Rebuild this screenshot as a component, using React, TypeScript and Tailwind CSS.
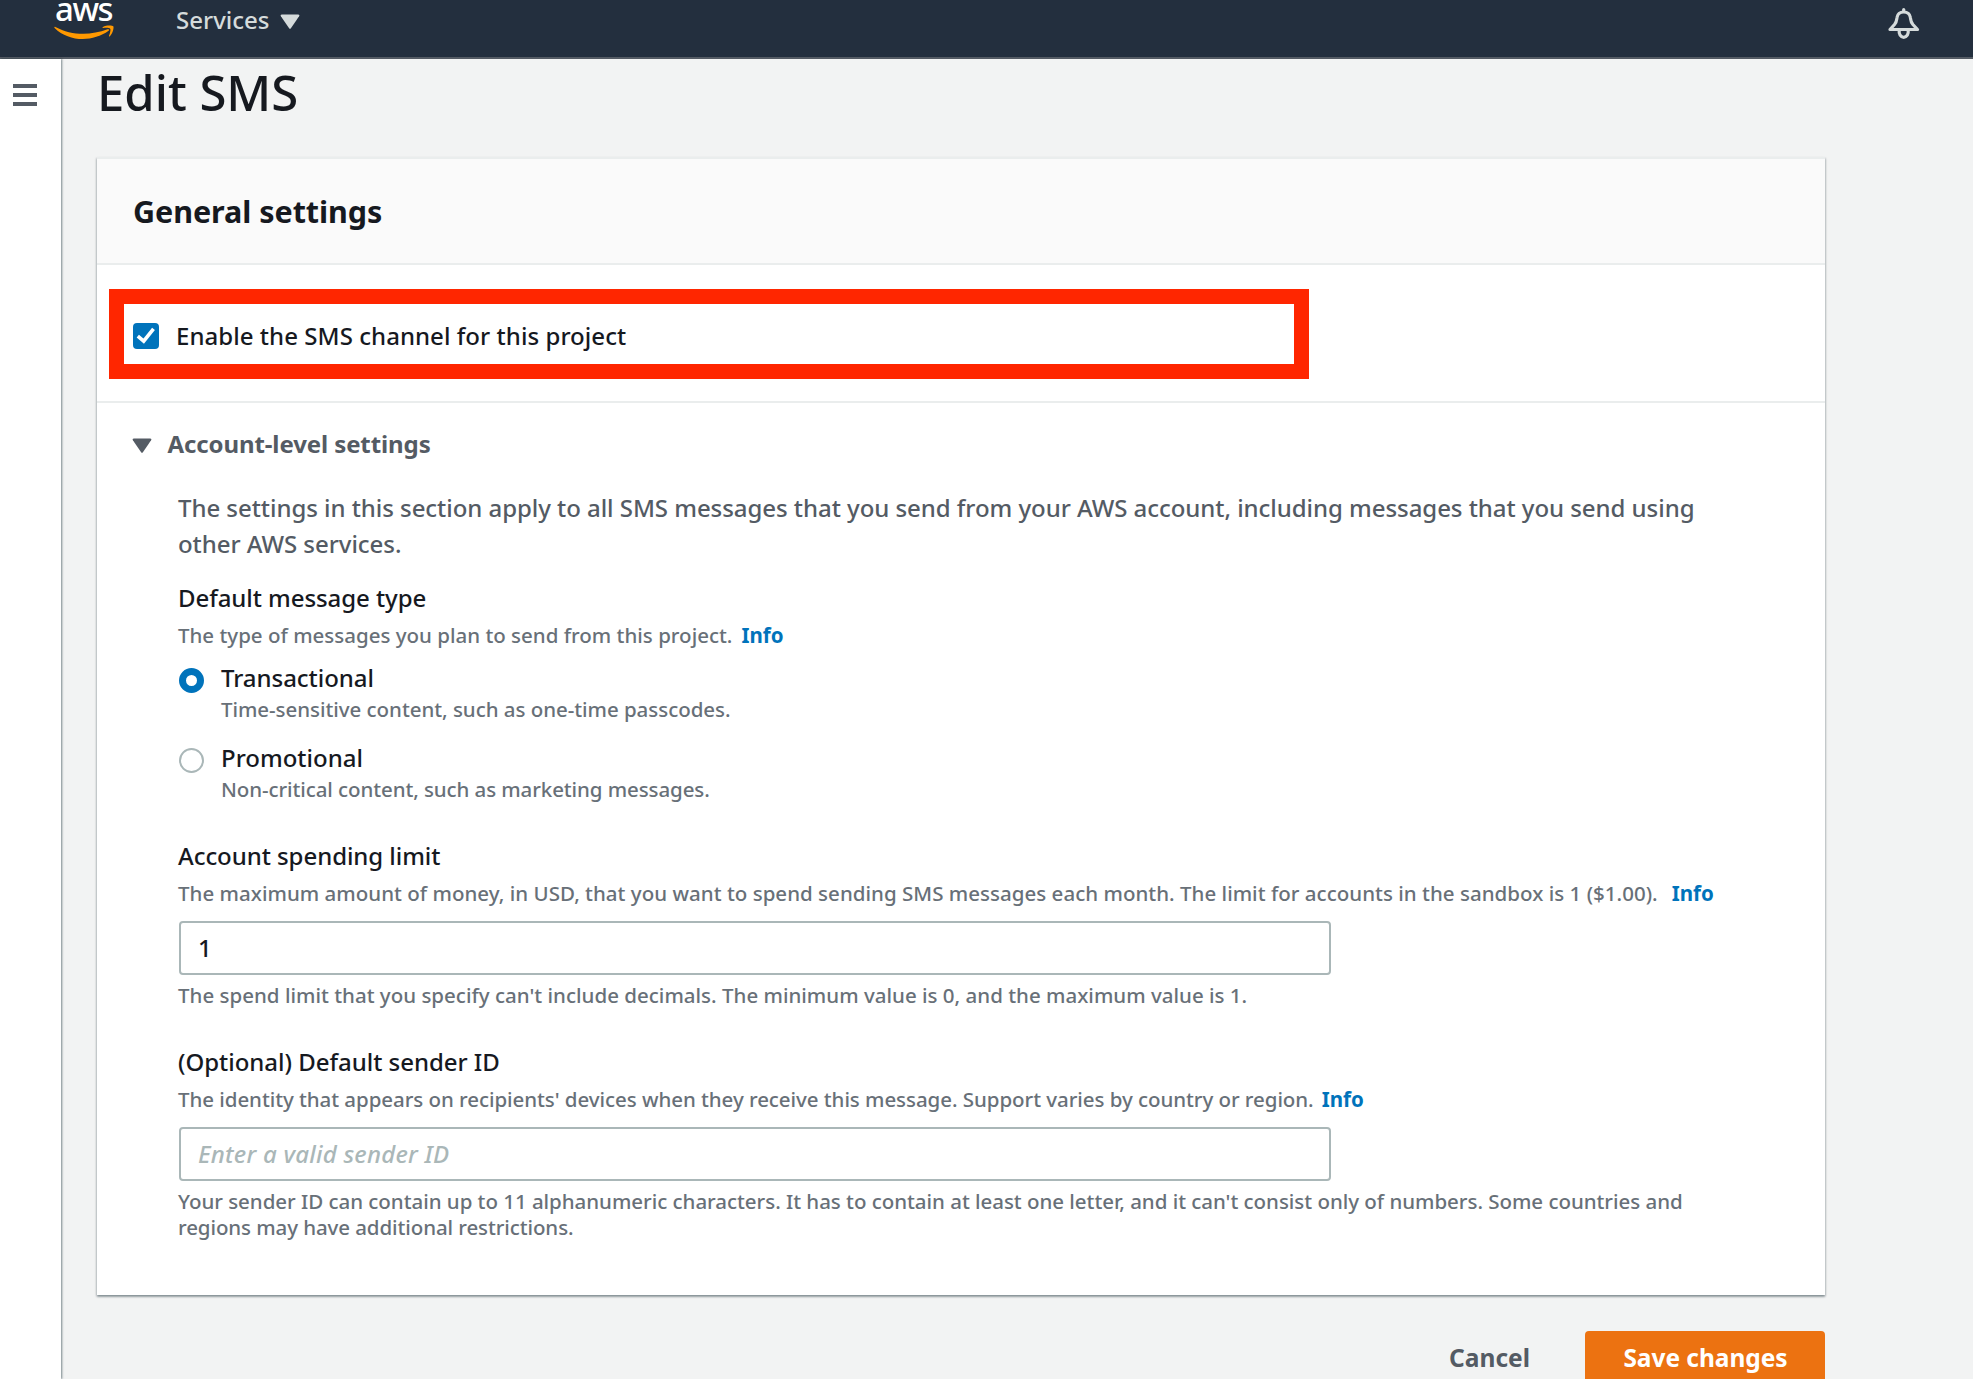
import type { ReactNode } from "react";

function AwsLogo() {
  return (
    <div className="relative h-10 w-[62px]">
      <div className="absolute left-[2px] top-0 text-[33px] leading-[18px] tracking-[-1.500px] text-white">aws</div>
      <svg className="absolute left-[0.500px] top-[24.500px]" width="61" height="16" viewBox="0 0 61 16" fill="#ff9900">
        <path d="M0.600 2.900C-0.100 2.200 0.500 1.400 1.400 1.900C17 10.300 36 10.800 53.500 4.300C55 3.700 55.800 4.900 54.600 5.800C38.500 17.300 15 17 0.600 2.900Z" />
        <path d="M49.200 3C48.400 3.100 48.300 2.300 49 1.900C52 0 58.400 0 59.300 1.300C60.200 2.600 58.700 8.600 55.900 11.300C55.300 11.800 54.700 11.500 55 10.800C55.900 8.500 57 4.800 56.200 3.700C55.400 2.600 51.700 2.700 49.200 3Z" />
      </svg>
    </div>
  );
}

function BellIcon() {
  return (
    <svg width="32" height="32" viewBox="0 0 32 32" fill="none" stroke="#d5dbdb" strokeWidth="3.200" strokeLinejoin="round" strokeLinecap="round">
      <path d="M15.700 1.600V3" />
      <path d="M2 21.500L6.500 16.500C9 13.500 8.600 11.500 9 9.500C9.600 6 12 4 15.700 4C19.400 4 21.800 6 22.400 9.500C22.800 11.500 22.400 13.500 24.900 16.500L29.500 21.500Z" />
      <path d="M11.200 22.500C10.700 26 12.600 29.300 15.700 29.300C18.800 29.300 20.700 26 20.200 22.500" />
    </svg>
  );
}

function Caret({ className }: { className: string }) {
  return (
    <svg className={className} width="20" height="16" viewBox="0 0 20 16" fill="currentColor">
      <path d="M1.800 0.500H18.200C19.300 0.500 19.700 1.300 19.100 2.200L10.900 14.300C10.400 15 9.600 15 9.100 14.300L0.900 2.200C0.300 1.300 0.700 0.500 1.800 0.500Z" />
    </svg>
  );
}

function Label({ children, className = "" }: { children: ReactNode; className?: string }) {
  return <div className={"text-[24px] leading-[36px] whitespace-nowrap " + className}>{children}</div>;
}

function Hint({ children, className = "", info = "" }: { children: ReactNode; className?: string; info?: string }) {
  return (
    <div className={"text-[20.5px] leading-[26px] whitespace-nowrap text-[#687078] " + className}>
      <span>{children}</span>
      {info && <a className={"font-bold tracking-normal text-[#0073bb] " + info}>Info</a>}
    </div>
  );
}

function Radio({ checked = false }: { checked?: boolean }) {
  return checked ? (
    <span className="ml-[0.500px] mt-[7.500px] size-[25px] shrink-0 rounded-full border-[7.500px] border-[#0073bb] bg-white" />
  ) : (
    <span className="ml-[0.500px] mt-[7.500px] size-[25px] shrink-0 rounded-full border-2 border-[#aab7b8] bg-white" />
  );
}

function TextField({ children }: { children: ReactNode }) {
  return (
    <div className="ml-[1px] mt-[15px] flex h-[54px] w-[1152px] items-center rounded-[4px] border-2 border-[#aab7b8] bg-white pl-[17px]">
      {children}
    </div>
  );
}

export default function App() {
  return (
    <div className="flex h-[1379px] w-[1973px] flex-col overflow-hidden bg-[#f2f3f3] font-['Noto_Sans',sans-serif] font-medium text-[#16191f]">
      <header className="flex h-[59px] shrink-0 items-start border-b-2 border-[#545b64] bg-[#232f3e] pl-[53px] pr-[53px]">
        <AwsLogo />
        <div className="ml-[61px] mt-[2px] flex items-center text-[24px] leading-[36px] text-[#d5dbdb]">
          <span>Services</span>
          <Caret className="ml-[11px] mt-[3px]" />
        </div>
        <div className="ml-auto mt-[8px]">
          <BellIcon />
        </div>
      </header>

      <div className="flex min-h-0 flex-1">
        <aside className="w-[61px] shrink-0 bg-white pl-[13px] pt-[25px] shadow-[1px_0_2px_0_rgba(0,28,36,0.5)]">
          <div className="flex w-[24px] flex-col gap-[5.500px]">
            <span className="h-[3.500px] bg-[#545b64]" />
            <span className="h-[3.500px] bg-[#545b64]" />
            <span className="h-[3.500px] bg-[#545b64]" />
          </div>
        </aside>

        <main className="flex flex-1 flex-col pl-[36px]">
          <h1 className="mt-[1px] text-[49px] font-medium leading-[65px]">Edit SMS</h1>

          <section className="mt-[32px] flex h-[1138px] w-[1728px] shrink-0 flex-col border-t-2 border-[#eaeded] bg-white shadow-[0_2px_2px_0_rgba(0,28,36,0.3),1px_1px_2px_0_rgba(0,28,36,0.15),-1px_1px_2px_0_rgba(0,28,36,0.15)]">
            <div className="flex h-[106px] shrink-0 items-center border-b-2 border-[#eaeded] bg-[#fafafa] pl-[36px]">
              <h2 className="text-[30.5px] font-bold leading-[40px] tracking-[-0.050px]">General settings</h2>
            </div>

            <div className="h-[138px] shrink-0 border-b-2 border-[#eaeded] pl-[12px] pt-[23.500px]">
              <div className="flex h-[90.500px] w-[1200px] items-center border-[15px] border-[#ff2600] pl-[9px] pt-[5px]">
                <span className="flex size-[26px] items-center justify-center rounded-[4px] bg-[#0073bb]">
                  <svg width="26" height="26" viewBox="0 0 26 26" fill="none" stroke="#fff" strokeWidth="3.600">
                    <path d="M4.800 13.200L10.700 18.200L20.500 5.800" />
                  </svg>
                </span>
                <Label className="ml-[17px] tracking-[0.050px]">Enable the SMS channel for this project</Label>
              </div>
            </div>

            <div className="pl-[36px] pt-[23px]">
              <div className="flex items-center text-[#545b64]">
                <Caret className="ml-[-1px] mt-[4px]" />
                <Label className="ml-[15.500px] font-bold tracking-[-0.100px]">Account-level settings</Label>
              </div>

              <div className="pl-[45px] pt-[28px]">
                <Label className="tracking-[-0.050px] text-[#545b64]">
                  The settings in this section apply to all SMS messages that you send from your AWS account, including messages that you send using
                </Label>
                <Label className="tracking-[-0.050px] text-[#545b64]">other AWS services.</Label>

                <Label className="mt-[18px] tracking-[-0.070px]">Default message type</Label>
                <Hint className="mt-[6px]" info="ml-[9px]">The type of messages you plan to send from this project.</Hint>
                <div className="mt-[12px] flex">
                  <Radio checked />
                  <div className="ml-[17.500px]">
                    <Label className="tracking-[-0.050px]">Transactional</Label>
                    <Hint className="tracking-[-0.040px]">Time-sensitive content, such as one-time passcodes.</Hint>
                  </div>
                </div>
                <div className="mt-[18px] flex">
                  <Radio />
                  <div className="ml-[17.500px]">
                    <Label>Promotional</Label>
                    <Hint className="tracking-[-0.090px]">Non-critical content, such as marketing messages.</Hint>
                  </div>
                </div>

                <Label className="mt-[36px] tracking-[-0.060px]">Account spending limit</Label>
                <Hint className="mt-[6px] tracking-[0.022px]" info="ml-[14px]">
                  The maximum amount of money, in USD, that you want to spend sending SMS messages each month. The limit for accounts in the sandbox is 1 ($1.00).
                </Hint>
                <TextField>
                  <Label>1</Label>
                </TextField>
                <Hint className="mt-[7px] tracking-[0.010px]">The spend limit that you specify can't include decimals. The minimum value is 0, and the maximum value is 1.</Hint>

                <Label className="mt-[36px] tracking-[-0.030px]">(Optional) Default sender ID</Label>
                <Hint className="mt-[6px] tracking-[-0.056px]" info="ml-[8px]">
                  The identity that appears on recipients' devices when they receive this message. Support varies by country or region.
                </Hint>
                <TextField>
                  <Label className="tracking-[0.240px] text-[#aab7b8] italic">Enter a valid sender ID</Label>
                </TextField>
                <Hint className="mt-[7px] tracking-[-0.032px]">
                  Your sender ID can contain up to 11 alphanumeric characters. It has to contain at least one letter, and it can't consist only of numbers. Some countries and
                </Hint>
                <Hint className="tracking-[-0.090px]">regions may have additional restrictions.</Hint>
              </div>
            </div>
          </section>

          <div className="mt-[36px] flex h-[72px] w-[1728px] shrink-0 justify-end text-[24.5px] font-bold leading-[36px]">
            <div className="mr-[55px] pt-[9px] text-[#545b64]">Cancel</div>
            <div className="flex w-[240px] justify-center rounded-[4px] bg-[#ec7211] pl-[1px] pt-[9px] tracking-[-0.050px] text-white">Save changes</div>
          </div>
        </main>
      </div>
    </div>
  );
}
